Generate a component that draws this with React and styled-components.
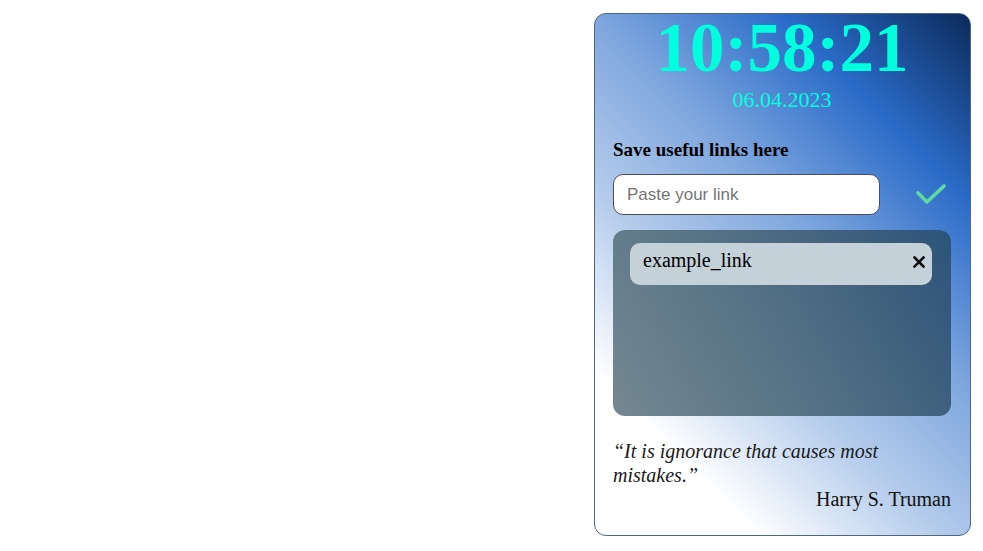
import React, { useState } from "react";
import styled, { createGlobalStyle } from "styled-components";

const GlobalStyle = createGlobalStyle`
	body {
		margin: 8px;
		background: #ffffff;
		font-family: "Liberation Serif", "Times New Roman", serif;
	}
`;

const Page = styled.div`
	display: flex;
	justify-content: flex-end;
`;

const Card = styled.div`
	box-sizing: border-box;
	width: 377px;
	height: 523px;
	margin: 5px 4px 5px 5px;
	padding: 0 19px 0 18px;
	border: 1px solid #4e6680;
	border-radius: 12px;
	background: linear-gradient(
		225deg,
		#0b2a5a 0%,
		#2a6bc8 21%,
		#7ea6de 42%,
		#b6cdec 62%,
		#ffffff 82%,
		#ffffff 100%
	);
	display: flex;
	flex-direction: column;
`;

const Clock = styled.div`
	font-size: 69px;
	line-height: 68px;
	font-weight: bold;
	color: #00ffdd;
	text-align: center;
`;

const DateLine = styled.div`
	margin-top: 7px;
	font-size: 22px;
	line-height: 22px;
	color: #00ffdd;
	text-align: center;
`;

const Heading = styled.h3`
	margin: 29px 0 0;
	font-size: 19px;
	line-height: 19px;
	font-weight: bold;
	color: #000000;
`;

const InputRow = styled.form`
	margin-top: 15px;
	display: flex;
	justify-content: space-between;
	align-items: center;
`;

const LinkInput = styled.input`
	box-sizing: border-box;
	width: 267px;
	height: 41px;
	padding: 0 13px;
	border: 1px solid #4a4f57;
	border-radius: 10px;
	background: #ffffff;
	font-family: "Liberation Sans", Arial, sans-serif;
	font-size: 17px;
	outline: none;

	&::placeholder {
		color: #757575;
	}
`;

const SaveButton = styled.button`
	width: 40px;
	height: 41px;
	padding: 0;
	border: none;
	background: transparent;
	display: flex;
	align-items: center;
	justify-content: center;
	cursor: pointer;
`;

const LinkList = styled.ul`
	box-sizing: border-box;
	margin: 15px 0 0;
	height: 186px;
	padding: 13px 19px 0 17px;
	list-style: none;
	border-radius: 12px;
	background: linear-gradient(60deg, #748891 0%, #4f6d83 55%, #2c5379 100%);
`;

const LinkItem = styled.li`
	box-sizing: border-box;
	height: 42px;
	padding: 7px 7px 0 13px;
	border-radius: 10px;
	background: #c5d1d8;
	display: flex;
	justify-content: space-between;
	align-items: flex-start;
	font-size: 20px;
	line-height: 20px;
	color: #000000;
`;

const RemoveButton = styled.button`
	margin-top: 6px;
	padding: 0;
	border: none;
	background: transparent;
	display: flex;
	cursor: pointer;
`;

const Quote = styled.p`
	margin: 23px 0 0;
	font-size: 20px;
	line-height: 24px;
	font-style: italic;
	color: #1a1a1a;
`;

const Author = styled.p`
	margin: 0;
	font-size: 20px;
	line-height: 24px;
	text-align: right;
	color: #111111;
`;

const CheckIcon = () => (
	<svg width="32" height="24" viewBox="0 0 32 24" fill="none">
		<polyline
			points="3,10 12,19 29,3"
			stroke="#5fdba0"
			strokeWidth="3.6"
			strokeLinecap="round"
			strokeLinejoin="round"
		/>
	</svg>
);

const CloseIcon = () => (
	<svg width="12" height="12" viewBox="0 0 12 12">
		<path
			d="M1.5 1.5 L10.5 10.5 M10.5 1.5 L1.5 10.5"
			stroke="#111111"
			strokeWidth="2.6"
			strokeLinecap="square"
		/>
	</svg>
);

export default function App() {
	const [links, setLinks] = useState(["example_link"]);
	const [value, setValue] = useState("");

	const handleSubmit = (e) => {
		e.preventDefault();
		if (!value.trim()) return;
		setLinks([...links, value.trim()]);
		setValue("");
	};

	return (
		<>
			<GlobalStyle />
			<Page>
				<Card>
					<Clock>10:58:21</Clock>
					<DateLine>06.04.2023</DateLine>
					<Heading>Save useful links here</Heading>
					<InputRow onSubmit={handleSubmit}>
						<LinkInput
							placeholder="Paste your link"
							value={value}
							onChange={(e) => setValue(e.target.value)}
						/>
						<SaveButton type="submit">
							<CheckIcon />
						</SaveButton>
					</InputRow>
					<LinkList>
						{links.map((link, i) => (
							<LinkItem key={i}>
								{link}
								<RemoveButton onClick={() => setLinks(links.filter((_, j) => j !== i))}>
									<CloseIcon />
								</RemoveButton>
							</LinkItem>
						))}
					</LinkList>
					<Quote>“It is ignorance that causes most mistakes.”</Quote>
					<Author>Harry S. Truman</Author>
				</Card>
			</Page>
		</>
	);
}
